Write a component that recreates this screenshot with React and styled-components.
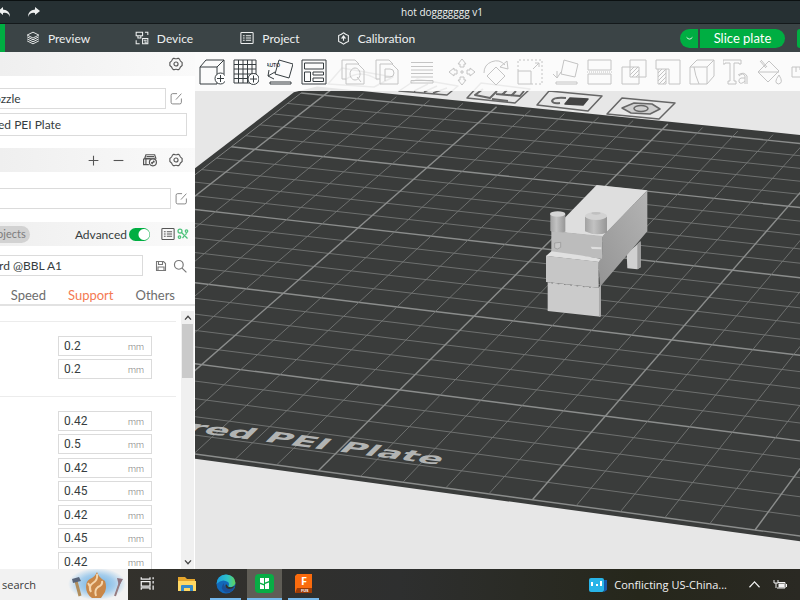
import React from "react"
import styled, { createGlobalStyle, css } from "styled-components"

const theme = {
    green: "#00ae42",
    ink: "#363d40",
    line: "#dbdbdb",
    orange: "#f47a52",
    app: `Lato, "Open Sans", sans-serif`,
    system: `"Open Sans", "Noto Sans", sans-serif`,
}

const GlobalStyle = createGlobalStyle`
    *{
        box-sizing: border-box;
    }
    body{
        margin: 0;
        font-family: ${theme.app};
        font-size: 13px;
        color: ${theme.ink};
        overflow: hidden;
    }
    button, input{
        font: inherit;
        color: inherit;
        border: none;
        background: none;
        padding: 0;
        margin: 0;
    }
    svg{
        display: block;
        flex: none;
    }
`

const Outer = styled.div`
    height: 100vh;
    display: flex;
    flex-direction: column;
`

/* ---------- title bar and main navigation ---------- */

const TitleBar = styled.header`
    flex: none;
    height: 24px;
    display: flex;
    align-items: center;
    background: #263033;
    border-top: 1px solid #0b1011;
    border-bottom: 1px solid #14191b;
    color: #eef0f0;
`

const HistoryButton = styled.button`
    width: 12px;
    margin-right: 18px;
    &:first-child{
        margin-left: -2px;
    }
`

const Title = styled.h1`
    flex: 1;
    margin: 0;
    padding-left: 26px;
    text-align: center;
    font: 400 10px/22px ${theme.system};
`

const Nav = styled.nav`
    flex: none;
    height: 28px;
    display: flex;
    align-items: center;
    background: #3b4446;
    color: #eef0f0;
    overflow: hidden;
`

const ActiveTab = styled.span`
    width: 5px;
    height: 28px;
    background: ${theme.green};
`

const NavButton = styled.button`
    flex: none;
    width: 106px;
    height: 28px;
    display: flex;
    align-items: center;
    justify-content: center;
    gap: 8px;
    font-size: 12px;
`

const SliceGroup = styled.div`
    margin-left: auto;
    flex: none;
    display: flex;
    gap: 2px;
`

const SliceButton = styled.button`
    height: 19px;
    background: ${theme.green};
    color: white;
    display: flex;
    align-items: center;
    justify-content: center;
    width: ${p => (p.$menu ? "18px" : "85px")};
    border-radius: ${p => (p.$menu ? "10px 0 0 10px" : "0 10px 10px 0")};
`

const PrintButton = styled.button`
    flex: none;
    width: 3px;
    height: 19px;
    margin-left: 12px;
    background: ${theme.green};
    border-radius: 8px 0 0 8px;
`

/* ---------- sidebar ---------- */

const Main = styled.main`
    flex: 1;
    min-height: 0;
    display: grid;
    grid-template-columns: 195px 1fr;
`

const Sidebar = styled.aside`
    min-height: 0;
    display: flex;
    flex-direction: column;
    background: white;
    overflow: hidden;
`

const SectionBar = styled.div`
    flex: none;
    height: 24px;
    display: flex;
    align-items: center;
    justify-content: flex-end;
    gap: ${p => p.$gap || 12}px;
    padding-right: ${p => p.$end || 12}px;
    background: linear-gradient(90deg, #efefef, #fafafa);
    color: #555;
`

const Rows = styled.div`
    flex: none;
    display: flex;
    flex-direction: column;
    gap: 4px;
    padding: ${p => p.$pad};
`

const Row = styled.div`
    display: flex;
    align-items: center;
    gap: ${p => p.$gap || 4}px;
    color: #777;
`

const Field = styled.input`
    flex: 1;
    min-width: 0;
    height: ${p => p.$height || 21}px;
    margin-left: -10px;
    padding-left: ${p => p.$inset}px;
    padding-bottom: 1px;
    border: 1px solid ${theme.line};
    color: ${theme.ink};
    font-size: 12px;
`

const IconButton = styled.button`
    flex: none;
    display: flex;
`

const ButtonPair = styled.div`
    display: flex;
    gap: 12px;
    margin-right: 6px;
`

const Pill = styled.button`
    height: 17px;
    margin: 0 auto 0 -3px;
    padding-right: 4px;
    border-radius: 0 9px 9px 0;
    background: #d2d2d2;
    color: #7c7c7c;
    font-size: 11px;
    line-height: 16px;
`

const ToggleLabel = styled.label`
    display: flex;
    align-items: center;
    gap: 2px;
    margin-right: 9px;
    color: ${theme.ink};
    font-size: 12px;
`

const Toggle = styled.input`
    appearance: none;
    width: 21px;
    height: 13px;
    border-radius: 7px;
    background: radial-gradient(circle at 15px 50%, white 5px, transparent 6px), ${theme.green};
`

const Tabs = styled.div`
    flex: none;
    height: 24px;
    display: flex;
    align-items: center;
    justify-content: flex-end;
    gap: 22px;
    padding: 3px 20px 0 0;
    border-bottom: 2px solid #e2e2e2;
`

const Tab = styled.button`
    color: ${p => (p.$active ? theme.orange : "#6d6d6d")};
`

const Settings = styled.div`
    flex: 1;
    min-height: 0;
    display: flex;
    margin-top: 5px;
    overflow: hidden;
`

const SettingList = styled.div`
    flex: 1;
    padding: 10px 5px 0 0;
`

const SettingGroup = styled.section`
    border-top: 1px solid #ececec;
    padding: 14px 0 17px 58px;
`

const NumberBox = styled.label`
    width: 94px;
    height: 20px;
    display: flex;
    align-items: center;
    border: 1px solid ${theme.line};
    padding: 0 7px 0 5px;
    &:nth-child(even){
        margin-top: 3px;
    }
    &:nth-child(odd):not(:first-child){
        margin-top: 4px;
    }
`

const NumberInput = styled.input`
    flex: 1;
    min-width: 0;
    font-family: Roboto, sans-serif;
    font-size: 12px;
`

const Unit = styled.span`
    color: #777;
    font: 300 9px/16px Roboto, sans-serif;
    padding-top: 2px;
`

const ScrollBar = styled.div`
    flex: none;
    width: 13px;
    display: flex;
    flex-direction: column;
    align-items: center;
    background: #f0f0f0;
    color: #444;
    margin-right: 1px;
    padding: 3px 0;
`

const Thumb = styled.span`
    width: 11px;
    height: 54px;
    margin: 2px 0 auto;
    background: #cacaca;
`

/* ---------- canvas ---------- */

const Canvas = styled.section`
    position: relative;
    min-width: 0;
    min-height: 0;
    overflow: hidden;
    background: #e7e7e7;
`

const Scene = styled.svg`
    width: 100%;
    height: 100%;
`

const Toolbar = styled.div`
    position: absolute;
    top: 0;
    left: 0;
    right: 0;
    height: 39px;
    display: flex;
    align-items: center;
    gap: 14px;
    padding-left: 4px;
    background: rgba(254, 254, 254, 0.88);
    overflow: hidden;
`

const ToolGroup = styled.div`
    display: flex;
    gap: 8px;
    ${p => p.$muted && css`
        color: #c4c4c4;
    `}
    &:nth-child(n + 4){
        margin-left: -4px;
    }
`

/* ---------- taskbar ---------- */

const Taskbar = styled.footer`
    flex: none;
    height: 31px;
    display: flex;
    background: linear-gradient(90deg, #35322a, #2e2f2f 50%, #26271b 80%, #2a2923);
    color: #f2f2f2;
    font: 11px/31px ${theme.system};
`

const SearchBox = styled.div`
    flex: none;
    width: 128px;
    display: flex;
    align-items: center;
    padding-left: 2px;
    background: #f2f2f2;
`

const SearchInput = styled.input`
    flex: 1;
    min-width: 0;
    &::placeholder{
        color: #3a3a3a;
        opacity: 1;
    }
`

const TaskButton = styled.button`
    flex: none;
    width: ${p => (p.$active ? 35 : 31)}px;
    margin: 0 ${p => (p.$active ? 2 : 4)}px;
    display: flex;
    align-items: center;
    justify-content: center;
    background: ${p => (p.$active ? "#5f5d56" : "none")};
    border-bottom: 2px solid ${p => (p.$open ? "#76b9ed" : "transparent")};
`

const Tray = styled.div`
    margin-left: auto;
    display: flex;
    align-items: center;
    gap: 13px;
    padding-right: 13px;
`

const News = styled.button`
    display: flex;
    align-items: center;
    gap: 7px;
    margin-right: 9px;
`

/* ---------- icons ---------- */

const Icon = ({ size = 14, box = 24, width = 1.6, children }) => (
    <svg width={size} height={size} viewBox={`0 0 ${box} ${box}`} fill="none" stroke="currentColor" strokeWidth={width} aria-hidden="true">
        {children}
    </svg>
)

const Gear = () => (
    <Icon size={14} width={1.9}>
        <path d="M8.500 2 Q12 4 15.500 2 L18 3.500 Q18.500 7 22.500 9.500 V14.500 Q18.500 17 18 20.500 L15.500 22 Q12 20 8.500 22 L6 20.500 Q5.500 17 1.500 14.500 V9.500 Q5.500 7 6 3.500 Z" />
        <circle cx="12" cy="12" r="3.500" />
    </Icon>
)

const Edit = () => (
    <Icon size={13}>
        <path d="M13 3 H5 Q2 3 2 6 V19 Q2 22 5 22 H18 Q21 22 21 19 V12 M11 14 L21 3" />
    </Icon>
)

const List = () => (
    <Icon size={14} width={1.8}>
        <rect x="1.500" y="2.500" width="21" height="19" rx="1.500" />
        <path d="M5 8 H8 M5 12 H8 M5 16 H8 M10 8 H19 M10 12 H19 M10 16 H19" />
    </Icon>
)

const Chevron = ({ up }) => (
    <Icon size={8} width={4}>
        <path d={up ? "M3 17 L12 7 L21 17" : "M3 7 L12 17 L21 7"} />
    </Icon>
)

const tools = {
    addCube: (
        <g>
            <path d="M1 8 L7 1 H25 L18 8 Z M1 8 V25 H18 V8 M25 1 V15" />
            <circle cx="21.500" cy="19.500" r="5.500" fill="#fff" />
            <path d="M21.500 16 V23 M18 19.500 H25" />
        </g>
    ),
    addPlate: (
        <g>
            <path d="M1 1 H23 V24 H1 Z M1 5.500 H23 M1 10 H23 M1 15 H23 M1 19.500 H23 M5.500 1 V24 M10 1 V24 M14.500 1 V24 M19 1 V24" />
            <circle cx="20.500" cy="20" r="5.500" fill="#fff" />
            <path d="M20.500 16.500 V23.500 M17 20 H24" />
        </g>
    ),
    autoOrient: (
        <g>
            <path d="M12 1 L26 5 L22 19 L8 15 Z M1 17 L8 13 M1 17 L2 11 M1 17 L7 20 M3 23 H24 V25 H3 Z" />
            <text x="-1" y="8" fontSize="5" fontWeight="700" fill="currentColor" stroke="none">AUTO</text>
        </g>
    ),
    arrange: <path d="M1 1 H25 V25 H1 Z M3.500 4 H22.500 V10 H3.500 Z M3.500 13 H9.500 V22.500 H3.500 Z M12 13 H22.500 V16 H12 Z M12 19 H22.500 V22.500 H12 Z" />,
    copyObject: <path d="M5 20 H1 V1 H14 L18 5 M5 5 H17 L23 11 V25 H5 Z M14 9 a5 6 0 1 0 .1 0 M16 18 L20 23" />,
    copyPart: <path d="M5 20 H1 V1 H14 L18 5 M5 5 H17 L23 11 V25 H5 Z M10 22 V10 H15 a4 4 0 0 1 0 8 H10" />,
    layers: <path d="M2 3.500 H24 M2 7.500 H24 M2 11 H24 M2 14.500 H24 M2 18 H24 M2 21.500 H24 V24 H2 Z" />,
    move: <path d="M13 0 L17 5 H15 V8 H11 V5 H9 Z M13 26 L17 21 H15 V18 H11 V21 H9 Z M0 13 L5 9 V11 H8 V15 H5 V17 Z M26 13 L21 9 V11 H18 V15 H21 V17 Z M12 12 H14 V14 H12 Z" />,
    rotate: <path d="M13 8 L22 17 L13 26 L4 17 Z M1 14 A12 12 0 0 1 22 6 M24 2 L25 10 L17 8 Z" />,
    scale: (
        <g>
            <path d="M1 12 H14 V25 H1 Z M16 10 L22 4 M18 4 H22 V8" />
            <path d="M1 12 V1 H25 V25 H14" strokeDasharray="2 2" />
        </g>
    ),
    layFlat: <path d="M11 1 L25 5 L22 18 L8 15 Z M0 15 L4 19 L8 13 M4 19 V12 M3 23 H24 V25 H3 Z" />,
    cut: (
        <g>
            <path d="M1 1 H24 V11 H1 Z M1 15 H24 V25 H1 Z" />
            <path d="M0 13 H26" strokeDasharray="1 1" />
        </g>
    ),
    boolean: <path d="M9 1 H25 V18 H9 Z M1 8 H18 V25 H1 Z M9 12 L13 8 M9 16 L17 8 M11 18 L18 11 M15 18 L18 15" />,
    support: <path d="M1 1 H25 V25 H14 V10 H1 Z M3 10 V25 H11 V10 M3 14 L7 10 M3 18 L11 10 M3 22 L11 14 M4 25 L11 18 M8 25 L11 22" />,
    seam: <path d="M1 8 L8 1 H25 L18 8 Z M1 8 V25 H18 V8 M25 1 V17 L18 25 M5 8 Q6 16 10 25" />,
    type: (
        <g>
            <path d="M0 1 H18 V5 H16 V4 H11 V22 H13 V25 H5 V22 H7 V4 H2 V5 H0 Z" />
            <path d="M16 17 Q20 13 22 17 V25 M22 19 H18 Q15 20 16 23 Q18 26 22 22 M24 25 V17 Q21 12 15 16" />
        </g>
    ),
    paint: <path d="M4 1 L10 8 M3 2 L9 9 M1 13 L12 2 L22 12 L11 23 Z M1 13 H22 M22 16 Q16 24 21.500 25 Q27 24 22 16" />,
    measure: <path d="M1 8 H26 V18 H1 Z M5 8 V13 M9 8 V11 M13 8 V13" />,
}

const Tool = ({ name }) => (
    <IconButton aria-label={name}>
        <Icon size={26} box={26} width={1}>
            {tools[name]}
        </Icon>
    </IconButton>
)

/* ---------- build plate ---------- */

// Projects plate coordinates (1 unit = one grid cell) to the view
const project = (u, v) => {
    const d = 1 - 0.003026 * u - 0.0075457 * v
    return [
        (31.826 * u - 15.745 * v + 324) / d,
        (3.028 * u + 9.683 * v + 95.3) / d,
    ]
}

const points = list => list.map(([u, v]) => project(u, v).map(n => n.toFixed(1)).join(",")).join(" ")

const range = (from, to) => Array.from({ length: to - from + 1 }, (_, i) => from + i)

// Local frame of the plate at (u, v), 100 units per cell, for flat lettering
const decal = (u, v) => {
    const [x, y] = project(u, v)
    const [ux, uy] = project(u + 1, v)
    const [vx, vy] = project(u, v + 1)
    return `matrix(${(ux - x) / 100} ${(uy - y) / 100} ${(vx - x) / 100} ${(vy - y) / 100} ${x} ${y})`
}

const Plate = () => (
    <g fill="none">
        <polygon fill="#3a3c3b" points={points([[-0.92, 0], [-0.5, -0.7], [26, -0.7], [26, 25.25], [-0.92, 25.25]])} />
        {range(0, 25).map(v => (
            <polyline
                key={v}
                points={points([[-0.7, v], [26, v]])}
                stroke={v % 5 ? "#747675" : "#8b8d8c"}
                strokeWidth={v % 5 ? 0.9 : 1.4}
            />
        ))}
        {range(0, 25).map(u => (
            <polyline
                key={u}
                points={points([[u, -0.5], [u, 25]])}
                stroke={u % 5 ? "#747675" : "#8b8d8c"}
                strokeWidth={u % 5 ? 0.9 : 1.4}
            />
        ))}
        <polyline points={points([[-0.7, 0], [-0.7, 25]])} stroke="#7d7f7e" />
        <text
            transform={decal(9.4, 23.85)}
            x="302"
            fontSize="84"
            fontFamily="DejaVu Sans, sans-serif"
            fontWeight="700"
            textAnchor="end"
            fill="#b2b4b3"
        >
            ured PEI Plate
        </text>
    </g>
)

const PlateMarks = () => (
    <g fill="none" stroke="#666" strokeWidth="1.5" strokeLinejoin="round">
        <path d="M342 68 L393 77 L374 87 L328 84 Z M345 80 Q360 68 378 80" />
        <path d="M417 79 L458 86 L447 95 L399 91 Z M414 91 L428 84 M424 92 L437 86 M433 93 L447 88" />
        <path d="M481 83 L530 89 L515 103 L467 98 Z" />
        <path d="M483 89 L475 95 L490 98 L497 91 M496 94 L520 96 L524 91 M502 95 L507 90 M511 96 L516 91 M492 99 L508 101" strokeWidth="2" />
        <path d="M549 91 L602 96 L588 111 L537 105 Z" />
        <path d="M566 98 Q553 97 552 101 Q553 104 560 103" strokeWidth="2" />
        <path d="M570 98 L588 99 L583 105 L565 104 Z" fill="#444" stroke="#444" />
        <path d="M622 98 L675 103 L659 119 L607 114 Z" />
        <path d="M634 103 L652 104 L660 109 L650 114 L631 113 L622 108 Z" fill="#cfcfcf" />
        <ellipse cx="641" cy="108.500" rx="7" ry="3" />
    </g>
)

const Model = () => (
    <g transform="translate(530 170) scale(.3333)">
        <defs>
            <linearGradient id="side" x1="1" y1="0" x2="0" y2="1">
                <stop offset="0" stopColor="#b4b4b4" />
                <stop offset="1" stopColor="#949494" />
            </linearGradient>
            <linearGradient id="round">
                <stop offset="0" stopColor="#a2a2a2" />
                <stop offset=".4" stopColor="#c2c2c2" />
                <stop offset="1" stopColor="#969696" />
            </linearGradient>
        </defs>
        <polygon points="290,250 332,215 332,292 322,298 292,295" fill="#d0d0d0" />
        <polygon points="322,222 332,212 332,292 322,298" fill="#9e9e9e" />
        <polygon points="200,45 352,61 218,200 65,184" fill="#dedede" />
        <polygon points="352,61 352,184 210,350 205,270 216,262 218,198" fill="url(#side)" />
        <polygon points="64,183 218,198 216,266 64,248" fill="#bcbcbc" />
        <polygon points="182,230 214,232 214,238 186,237" fill="#dedede" />
        <polygon points="64,244 150,256 212,266 206,276 48,258" fill="#e0e0e0" />
        <polygon points="48,257 206,275 206,353 48,336" fill="#c6c6c6" />
        <polygon points="53,337 206,353 212,346 212,440 53,423" fill="#cbcbcb" />
        <polygon points="207,353 213,346 213,438 207,440" fill="#aaa" />
        <path d="M64 339 L196 354" stroke="#888" strokeWidth="3" strokeDasharray="5 14" />
        <path d="M61 132 V183 Q84 190 106 185 V132 Z" fill="url(#round)" />
        <ellipse cx="83" cy="132" rx="23" ry="8" fill="#d5d5d5" />
        <path d="M165 140 V184 Q197 200 231 188 V140 Z" fill="url(#round)" />
        <ellipse cx="198" cy="138" rx="33" ry="12" fill="#d2d2d2" />
        <ellipse cx="198" cy="130" rx="14" ry="4" fill="#c0c0c0" />
        <path d="M74 219 L92 217 V232 L82 237 L74 234 Z" fill="#c8c8c8" stroke="#929292" strokeWidth="2" />
    </g>
)

const lineWidths = ["0.42", "0.5", "0.42", "0.45", "0.42", "0.45", "0.42"]

const NumberField = ({ name, value }) => (
    <NumberBox>
        <NumberInput aria-label={name} defaultValue={value} />
        <Unit>mm</Unit>
    </NumberBox>
)

const App = () => (
    <Outer>
        <GlobalStyle />
        <TitleBar>
            <HistoryButton aria-label="Undo">
                <svg width="12" height="10" viewBox="0 0 12 10"><path d="M5 0 L0 4 L5 8 V6 Q10 5 12 10 Q12 3 5 2.500 Z" fill="currentColor" /></svg>
            </HistoryButton>
            <HistoryButton aria-label="Redo">
                <svg width="12" height="10" viewBox="0 0 12 10"><path d="M7 0 L12 4 L7 8 V6 Q2 5 0 10 Q0 3 7 2.500 Z" fill="currentColor" /></svg>
            </HistoryButton>
            <Title>hot doggggggg v1</Title>
        </TitleBar>
        <Nav>
            <ActiveTab />
            <NavButton>
                <Icon><path d="M12 2 L22 7 L12 12 L2 7 Z M2 10 L12 15 L22 10 M2 13.500 L12 18.500 L22 13.500 M2 17 L12 22 L22 17" /></Icon>
                Preview
            </NavButton>
            <NavButton>
                <Icon width={1.8}><path d="M2 2 H13 V8 H2 Z M5 8 V12 H10 V8 M13 13 H22 V22 H13 Z M15 16 H20 M16 19 H19 V22 M17 2 H22 V7 M2 16 V22 H8" /></Icon>
                Device
            </NavButton>
            <NavButton><List />Project</NavButton>
            <NavButton>
                <Icon size={13} width={2}><path d="M12 1.500 L16 4 L21 6.500 V17.500 L16 20 L12 22.500 L8 20 L3 17.500 V6.500 L8 4 Z" /><path d="M12 16 V9 M9 11 L12 7 L15 11 Z" fill="currentColor" /></Icon>
                Calibration
            </NavButton>
            <SliceGroup>
                <SliceButton $menu aria-label="Slice options">
                    <Icon size={7} width={3}><path d="M2 8 Q12 20 22 8" /></Icon>
                </SliceButton>
                <SliceButton>Slice plate</SliceButton>
            </SliceGroup>
            <PrintButton aria-label="Print" />
        </Nav>
        <Main>
            <Sidebar>
                <SectionBar>
                    <IconButton aria-label="Printer settings"><Gear /></IconButton>
                </SectionBar>
                <Rows $pad="12px 8px 12px 0">
                    <Row>
                        <Field aria-label="Nozzle" defaultValue="ozzle" $inset={3} />
                        <IconButton aria-label="Edit printer"><Edit /></IconButton>
                        <span />
                    </Row>
                    <Row>
                        <Field aria-label="Plate type" defaultValue="ed PEI Plate" $inset={7} $height={23} />
                    </Row>
                </Rows>
                <SectionBar>
                    <ButtonPair>
                        <IconButton aria-label="Add filament"><Icon size={13} width={2}><path d="M12 3 V21 M3 12 H21" /></Icon></IconButton>
                        <IconButton aria-label="Remove filament"><Icon size={13} width={2}><path d="M3 12 H21" /></Icon></IconButton>
                    </ButtonPair>
                    <IconButton aria-label="Sync filament">
                        <Icon size={14} width={2}>
                            <path d="M5 3 H20 L22 9 H3 Z M6 6 H19 M1 10 H13 M1 10 V20 H10 M5 10 V20" />
                            <circle cx="17" cy="16" r="6" />
                            <path d="M14 17 L20 15 M15 19 L19 13" />
                        </Icon>
                    </IconButton>
                    <IconButton aria-label="Filament settings"><Gear /></IconButton>
                </SectionBar>
                <Rows $pad="16px 7px 13px 0">
                    <Row>
                        <Field aria-label="Filament" $inset={8} />
                        <IconButton aria-label="Edit filament"><Edit /></IconButton>
                    </Row>
                </Rows>
                <SectionBar $gap={2} $end={6}>
                    <Pill>ojects</Pill>
                    <ToggleLabel>
                        Advanced
                        <Toggle type="checkbox" defaultChecked />
                    </ToggleLabel>
                    <IconButton aria-label="Parameter list"><List /></IconButton>
                    <IconButton aria-label="Compare">
                        <svg width="12" height="12" viewBox="0 0 24 24" fill="none" stroke="#4cc27a" strokeWidth="2.500"><circle cx="6" cy="6" r="4" /><circle cx="19" cy="6" r="2.500" /><circle cx="5" cy="18" r="2.500" /><path d="M9 9 L21 21 M16 13 L20 11 M11 20 L14 16" /></svg>
                    </IconButton>
                </SectionBar>
                <Rows $pad="9px 8px 6px 0">
                    <Row $gap={6}>
                        <Field aria-label="Process" defaultValue="rd @BBL A1" $inset={8} />
                        <span />
                        <IconButton aria-label="Save"><Icon size={12} width={2.2}><path d="M3 3 H17 L21 7 V21 H3 Z M7 3 V9 H15 V3 M6 21 V14 H18 V21" /></Icon></IconButton>
                        <IconButton aria-label="Search"><Icon size={14} width={2}><circle cx="10" cy="10" r="7.500" /><path d="M15.500 15.500 L23 23" /></Icon></IconButton>
                    </Row>
                </Rows>
                <Tabs>
                    <Tab>Speed</Tab>
                    <Tab $active>Support</Tab>
                    <Tab>Others</Tab>
                </Tabs>
                <Settings>
                    <SettingList>
                        <SettingGroup>
                            <NumberField name="Layer height" value="0.2" />
                            <NumberField name="Initial layer height" value="0.2" />
                        </SettingGroup>
                        <SettingGroup>
                            {lineWidths.map((value, i) => (
                                <NumberField key={i} name={`Line width ${i + 1}`} value={value} />
                            ))}
                        </SettingGroup>
                    </SettingList>
                    <ScrollBar>
                        <Chevron up />
                        <Thumb />
                        <Chevron />
                    </ScrollBar>
                </Settings>
            </Sidebar>
            <Canvas>
                <Scene viewBox="195 52 605 517" preserveAspectRatio="xMinYMin slice" role="img" aria-label="Build plate">
                    <Plate />
                    <PlateMarks />
                    <Model />
                </Scene>
                <Toolbar>
                    <ToolGroup>
                        {["addCube", "addPlate", "autoOrient", "arrange"].map(name => <Tool key={name} name={name} />)}
                    </ToolGroup>
                    <ToolGroup $muted>
                        {["copyObject", "copyPart", "layers"].map(name => <Tool key={name} name={name} />)}
                    </ToolGroup>
                    <ToolGroup $muted>
                        {["move", "rotate", "scale"].map(name => <Tool key={name} name={name} />)}
                    </ToolGroup>
                    <ToolGroup $muted>
                        {["layFlat", "cut", "boolean", "support", "seam", "type", "paint", "measure"].map(name => <Tool key={name} name={name} />)}
                    </ToolGroup>
                </Toolbar>
            </Canvas>
        </Main>
        <Taskbar>
            <SearchBox>
                <SearchInput aria-label="Search" placeholder="search" />
                <svg width="60" height="31" viewBox="0 0 60 31">
                    <defs>
                        <radialGradient id="glow">
                            <stop offset="0" stopColor="#69aee0" />
                            <stop offset=".6" stopColor="#a5cdec" />
                            <stop offset="1" stopColor="#f2f2f2" />
                        </radialGradient>
                    </defs>
                    <ellipse cx="29" cy="15" rx="29" ry="16" fill="url(#glow)" />
                    <path d="M8 12 L12 27" stroke="#b08d5c" strokeWidth="3" />
                    <path d="M4 10 L11 8 L13 12 L5 14 Z" fill="#59657a" />
                    <path d="M53 10 L47 27" stroke="#957b80" strokeWidth="2" />
                    <path d="M49 9 L55 10 L51 17 Z" fill="#8d7480" />
                    <path d="M29 3 Q31 9 37 12 Q39 18 37 23 L33 29 H24 Q18 25 18 18 Q18 12 22 10 Q27 8 29 3 Z" fill="#c98748" />
                    <path d="M29 5 Q30 11 25 14 Q20 17 23 23 M34 12 Q35 16 30 18 Q26 21 28 27 M20 14 Q23 18 22 22" stroke="#f5d5ab" strokeWidth="2" fill="none" />
                </svg>
            </SearchBox>
            <TaskButton aria-label="Task view">
                <Icon size={15} width={2}><path d="M2 2 V5 H16 V2 M2 9 H16 V16 H2 Z M2 22 V19 H16 V22 M21 2 V5 M21 8 V12 M21 15 V22" /></Icon>
            </TaskButton>
            <TaskButton aria-label="File Explorer">
                <svg width="18" height="16" viewBox="0 0 18 16"><path d="M0 1 H7 L9 3 H17 V15 H0 Z" fill="#e5a52c" /><path d="M0 5 H18 V15 H0 Z" fill="#ffd863" /><path d="M3 15 V10 Q3 9 4 9 H14 Q15 9 15 10 V15 H12 V12 H6 V15 Z" fill="#368bc9" /></svg>
            </TaskButton>
            <TaskButton $open aria-label="Edge">
                <svg width="20" height="20" viewBox="0 0 20 20">
                    <defs>
                        <linearGradient id="edge"><stop offset="0" stopColor="#1a9de0" /><stop offset=".6" stopColor="#2fc2c7" /><stop offset="1" stopColor="#61d455" /></linearGradient>
                    </defs>
                    <circle cx="10" cy="10" r="9.500" fill="#1268b9" />
                    <path d="M.5 10 Q1 1 10 .5 Q19 1 19.500 9 Q18 14 12 13 Q14 10 12 8 Q6 4 .5 10 Z" fill="url(#edge)" />
                    <path d="M8 9 Q7 16 18 14 Q14 20 9 18 Q3 14 8 9 Z" fill="#1b4f96" />
                    <path d="M10 10 Q8 14 13 15 Q17 15 19 12 Q15 14 12 12.500 Z" fill="#33312b" />
                </svg>
            </TaskButton>
            <TaskButton $active $open aria-label="Slicer">
                <svg width="19" height="19" viewBox="0 0 19 19"><rect width="19" height="19" rx="4" fill="#08ad45" /><path d="M5 4 H9 V10 L5 8.500 Z M10 4 H14 V7 L10 8.500 Z M5 10 L9 11.500 V15 H5 Z M10 10 L14 8.500 V15 H10 Z" fill="#fff" /></svg>
            </TaskButton>
            <TaskButton $open aria-label="Fusion">
                <svg width="18" height="19" viewBox="0 0 18 19">
                    <path d="M2 0 H17 V19 H0 V2 Z" fill="#fb6b0d" />
                    <path d="M2 14 H17 V19 H0 Z" fill="#9c3c07" />
                    <text x="6" y="11" fontSize="11" fontWeight="700" fill="#fff">F</text>
                    <text x="6" y="18" fontSize="4" fontWeight="700" fill="#fff">FUS</text>
                </svg>
            </TaskButton>
            <Tray>
                <News>
                    <svg width="18" height="14" viewBox="0 0 18 14"><path d="M14 2 H18 V12 L15 14 Z" fill="#1659ac" /><rect width="15" height="14" rx="2" fill="#28b4e8" /><path d="M3 4 V8 M8 6 V8 M12 3 V8" stroke="#fff" strokeWidth="2" /></svg>
                    Conflicting US-China...
                </News>
                <Icon size={11} width={2.5}><path d="M1 18 L12 6 L23 18" /></Icon>
                <svg width="14" height="11" viewBox="0 0 14 11" fill="none" stroke="currentColor"><path d="M1 1 V4 H5 V1 M3 4 V9 M5 3.500 H12 V9 H4 M13.500 5 V8" /><rect x="6" y="5" width="5" height="3" fill="currentColor" /></svg>
            </Tray>
        </Taskbar>
    </Outer>
)

export default App
